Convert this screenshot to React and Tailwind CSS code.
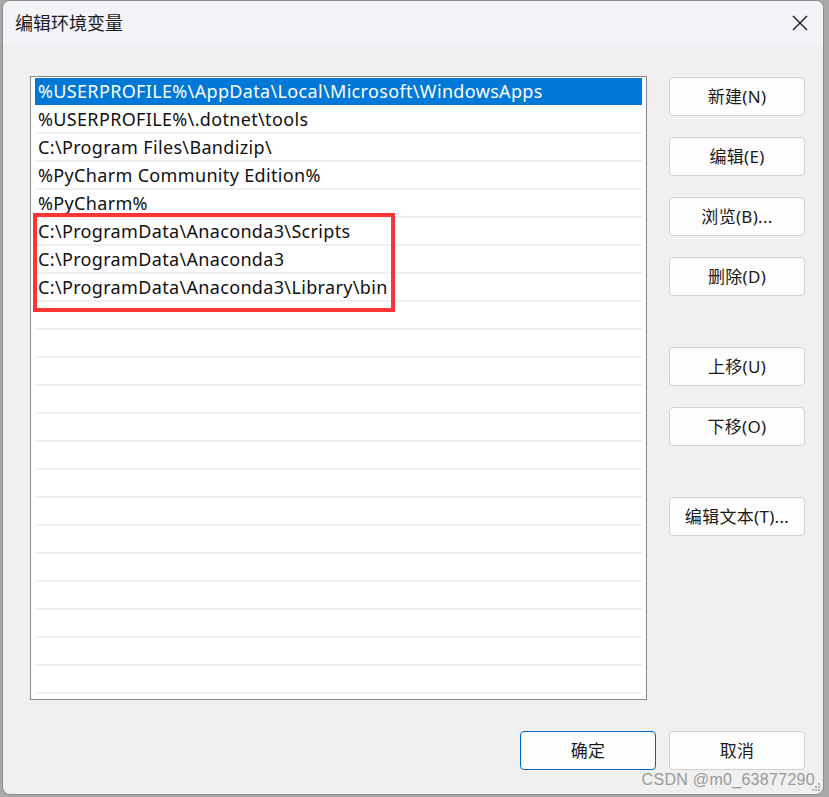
import * as React from 'react';

const PATHS = [
	'%USERPROFILE%\\AppData\\Local\\Microsoft\\WindowsApps',
	'%USERPROFILE%\\.dotnet\\tools',
	'C:\\Program Files\\Bandizip\\',
	'%PyCharm Community Edition%',
	'%PyCharm%',
	'C:\\ProgramData\\Anaconda3\\Scripts',
	'C:\\ProgramData\\Anaconda3',
	'C:\\ProgramData\\Anaconda3\\Library\\bin',
];

const ROWS = 22;

const font = { fontFamily: '"Noto Sans", "Noto Sans CJK SC", sans-serif' };

const Btn = ({ children, primary }) => (
	<button
		className={
			primary
				? 'w-[136px] h-[39px] rounded-[4px] border border-[#0067c0] bg-[#fdfdfd] text-[17px] tracking-[0.3px] text-[#1a1a1a]'
				: 'w-[136px] h-[39px] rounded-[4px] border border-[#d0d0d0] bg-[#fdfdfd] text-[17px] tracking-[0.3px] text-[#1a1a1a]'
		}
	>
		{children}
	</button>
);

export default function App() {
	const rows = [];
	for (let i = 0; i < ROWS; i++) {
		rows.push(PATHS[i] || '');
	}

	return (
		<div className='w-[829px] h-[797px] bg-[#a8a8a8] flex pl-[2px] pr-[5px] pb-[2px]' style={font}>
			<div className='flex-1 flex flex-col rounded-[8px] overflow-hidden bg-[#f0f0f0] border border-[#8c8c8c] relative'>
				{/* title bar */}
				<div className='h-[44px] bg-[#f3f3f8] flex items-center justify-between pl-[12px] pr-[14px]'>
					<span className='text-[18px] text-[#1a1a1a]'>编辑环境变量</span>
					<svg width='18' height='18' viewBox='0 0 18 18'>
						<path d='M2 2 L16 16 M16 2 L2 16' stroke='#1a1a1a' strokeWidth='1.4' />
					</svg>
				</div>

				<div className='flex pl-[27px] pt-[31px]'>
					{/* list */}
					<div className='relative w-[617px] h-[624px] bg-white border border-[#868693] pt-[1px] px-[4px]'>
						{rows.map((p, i) => (
							<div
								key={i}
								className={
									i === 0
										? 'h-[28px] bg-[#0078d7] text-white text-[18px] leading-[27px] pl-[3px] tracking-[0.34px] border-b border-white whitespace-nowrap'
										: 'h-[28px] text-[#111] text-[18px] leading-[27px] pl-[3px] tracking-[0.34px] border-b-2 border-[#f0f0f0] whitespace-nowrap'
								}
							>
								{p}
							</div>
						))}
						<div className='absolute left-[2px] top-[136px] w-[362px] h-[99px] border-4 border-[#fc3535]' />
					</div>

					{/* side buttons */}
					<div className='flex flex-col ml-[22px] pt-[1px]'>
						<div className='flex flex-col gap-[21px]'>
							<Btn>新建(N)</Btn>
							<Btn>编辑(E)</Btn>
							<Btn>浏览(B)...</Btn>
							<Btn>删除(D)</Btn>
						</div>
						<div className='flex flex-col gap-[21px] mt-[51px]'>
							<Btn>上移(U)</Btn>
							<Btn>下移(O)</Btn>
						</div>
						<div className='mt-[51px]'>
							<Btn>编辑文本(T)...</Btn>
						</div>
					</div>
				</div>

				{/* bottom buttons */}
				<div className='flex justify-end gap-[13px] pr-[18px] mt-[31px]'>
					<Btn primary>确定</Btn>
					<Btn>取消</Btn>
				</div>

				<div className='absolute right-[8px] bottom-[2px] text-[16px] text-[#9a9a9a] tracking-[0.3px]' style={{ fontFamily: '"Liberation Sans", sans-serif' }}>
					CSDN @m0_63877290
				</div>
				<svg className='absolute right-[2px] bottom-[2px]' width='10' height='10' viewBox='0 0 10 10'>
					<rect x='7' y='1' width='2' height='2' fill='#b0b0b0' />
					<rect x='4' y='4' width='2' height='2' fill='#b0b0b0' />
					<rect x='7' y='4' width='2' height='2' fill='#b0b0b0' />
					<rect x='1' y='7' width='2' height='2' fill='#b0b0b0' />
					<rect x='4' y='7' width='2' height='2' fill='#b0b0b0' />
					<rect x='7' y='7' width='2' height='2' fill='#b0b0b0' />
				</svg>
			</div>
		</div>
	);
}
